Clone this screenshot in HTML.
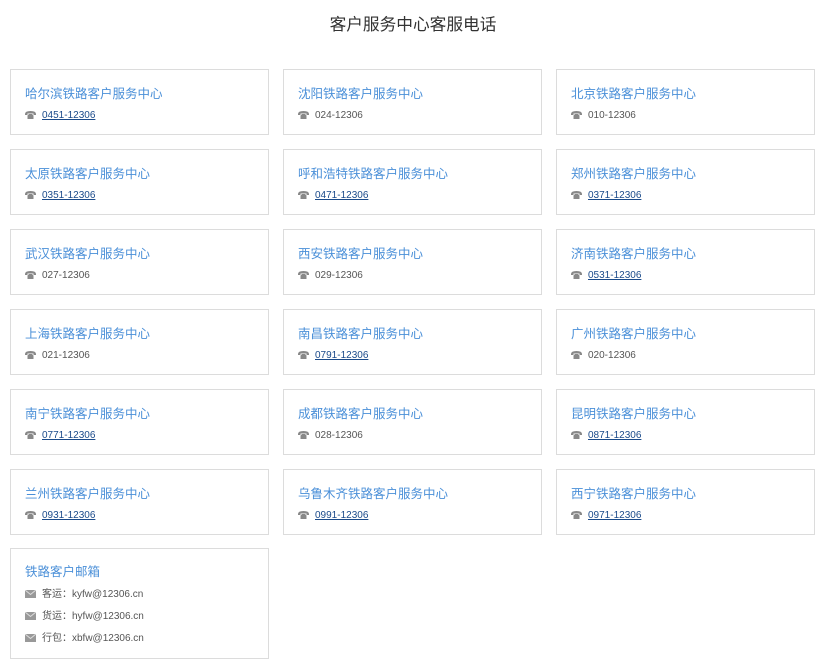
<!DOCTYPE html>
<html><head><meta charset="utf-8"><style>
body{margin:0;width:826px;height:669px;background:#fff;font-family:"Liberation Sans","Noto Sans CJK SC",sans-serif;position:relative;overflow:hidden}
h1{position:absolute;top:14px;left:0;width:826px;text-align:center;margin:0;font-size:16.7px;font-weight:normal;color:#333;line-height:22px}
.b{position:absolute;width:257px;height:64px;border:1px solid #dcdcdc;box-sizing:content-box}
.t{position:absolute;left:14px;top:15px;font-size:12.5px;color:#4a8fd8;line-height:18px;white-space:nowrap}
.p{position:absolute;left:14px;top:39px;font-size:10px;color:#555;line-height:14px;white-space:nowrap}
.p a{color:#1a4a8a;text-decoration:underline}
.ic{display:inline-block;width:11px;height:8px;vertical-align:-1px;margin-right:6px}
.m{position:absolute;left:14px;font-size:10px;color:#555;white-space:nowrap;line-height:14px}
</style></head><body>
<h1>客户服务中心客服电话</h1>
<div id="c"></div>
<script>
var d=[["哈尔滨铁路客户服务中心","0451-12306",1],["沈阳铁路客户服务中心","024-12306",0],["北京铁路客户服务中心","010-12306",0],
["太原铁路客户服务中心","0351-12306",1],["呼和浩特铁路客户服务中心","0471-12306",1],["郑州铁路客户服务中心","0371-12306",1],
["武汉铁路客户服务中心","027-12306",0],["西安铁路客户服务中心","029-12306",0],["济南铁路客户服务中心","0531-12306",1],
["上海铁路客户服务中心","021-12306",0],["南昌铁路客户服务中心","0791-12306",1],["广州铁路客户服务中心","020-12306",0],
["南宁铁路客户服务中心","0771-12306",1],["成都铁路客户服务中心","028-12306",0],["昆明铁路客户服务中心","0871-12306",1],
["兰州铁路客户服务中心","0931-12306",1],["乌鲁木齐铁路客户服务中心","0991-12306",1],["西宁铁路客户服务中心","0971-12306",1]];
var phone='<svg class="ic" viewBox="0 0 11 8"><path d="M0 3Q0 0 5.5 0T11 3L11 4 8.5 4 8.5 2.5 2.5 2.5 2.5 4 0 4Z" fill="#888"/><path d="M2.5 4.5L4 3h3l1.5 1.5V8h-6Z" fill="#888"/></svg>';
var mail='<svg class="ic" viewBox="0 0 11 8"><rect width="11" height="8" fill="#999"/><path d="M0 0L5.5 4.5 11 0" stroke="#ddd" fill="none"/></svg>';
var h='';
d.forEach(function(r,i){var x=10+(i%3)*273,y=69+Math.floor(i/3)*80;
h+='<div class="b" style="left:'+x+'px;top:'+y+'px"><div class="t">'+r[0]+'</div><div class="p">'+phone+(r[2]?'<a>'+r[1]+'</a>':r[1])+'</div></div>';});
h+='<div class="b" style="left:10px;top:548px;height:109px"><div class="t" style="top:14px">铁路客户邮箱</div>'+
'<div class="m" style="top:39px">'+mail+'客运：kyfw@12306.cn</div>'+
'<div class="m" style="top:61px">'+mail+'货运：hyfw@12306.cn</div>'+
'<div class="m" style="top:83px">'+mail+'行包：xbfw@12306.cn</div></div>';
document.getElementById('c').innerHTML=h;
</script>
</body></html>
